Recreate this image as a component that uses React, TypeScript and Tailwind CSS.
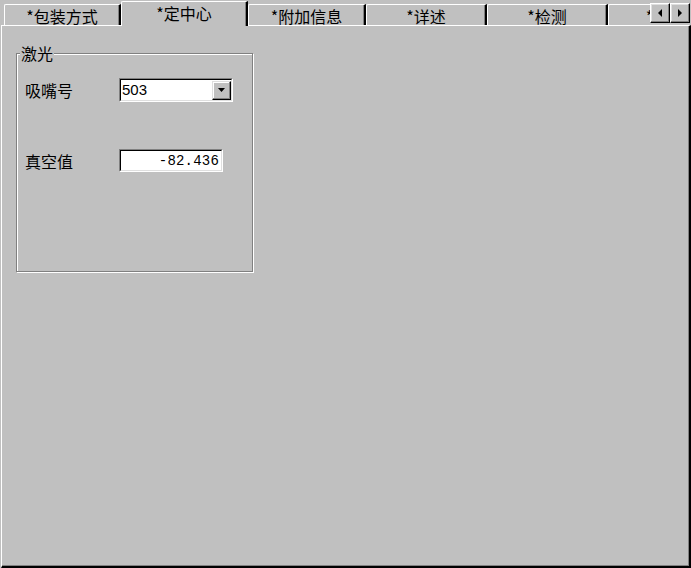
import React from 'react';

const cjk = { fontFamily: '"Noto Sans CJK SC", "Noto Sans", sans-serif' };

const Tab = ({ label, width, active }: { label: string; width: number; active?: boolean }) => {
  if (active) {
    return (
      <div
        className="relative z-10 -mb-px h-[25px] shrink-0 flex justify-center pt-[3px] bg-[#c0c0c0] border-t border-l border-white border-r-2 border-r-black rounded-tl-[2px] shadow-[inset_-1px_0_0_#808080] text-[16px] leading-[16px] text-black"
        style={{ width }}
      >
        {label}
      </div>
    );
  }
  return (
    <div
      className="h-[21px] shrink-0 flex justify-center pt-[3px] bg-[#c0c0c0] border-t border-l border-white border-r-2 border-r-black rounded-tl-[2px] shadow-[inset_-1px_0_0_#808080] text-[16px] leading-[16px] text-black"
      style={{ width }}
    >
      {label}
    </div>
  );
};

const ArrowButton = ({ dir }: { dir: 'left' | 'right' }) => (
  <div className="w-[20px] h-[20px] flex items-center justify-center bg-[#c0c0c0] border border-t-white border-l-white border-b-black border-r-black shadow-[inset_-1px_-1px_0_#808080,inset_1px_1px_0_#dfdfdf]">
    <svg width="5" height="8" viewBox="0 0 5 8">
      {dir === 'left' ? <polygon points="4,0 4,8 0,4" fill="#000" /> : <polygon points="0,0 0,8 4,4" fill="#000" />}
    </svg>
  </div>
);

const Sunken = ({ className, children }: { className: string; children: React.ReactNode }) => (
  <div className={`border border-t-[#808080] border-l-[#808080] border-b-white border-r-white ${className}`}>
    <div className="w-full h-full flex items-center bg-white border border-t-black border-l-black border-b-[#dfdfdf] border-r-[#dfdfdf]">
      {children}
    </div>
  </div>
);

const App = () => {
  return (
    <div className="w-[691px] h-[568px] bg-[#c0c0c0] flex flex-col overflow-hidden" style={cjk}>
      <div className="h-[25px] flex shrink-0 pl-[4px]">
        <div className="w-[646px] h-full flex items-end overflow-x-clip">
          <Tab label="*包装方式" width={117} />
          <Tab label="*定中心" width={127} active />
          <Tab label="*附加信息" width={118} />
          <Tab label="*详述" width={121} />
          <Tab label="*检测" width={121} />
          <Tab label="*其他" width={116} />
        </div>
        <div className="flex mt-[3px] self-start">
          <ArrowButton dir="left" />
          <ArrowButton dir="right" />
        </div>
      </div>

      <div className="flex-1 ml-px border-t border-l border-white border-r-2 border-b-2 border-r-black border-b-black shadow-[inset_-1px_-1px_0_#808080]">
        <div className="relative ml-[14px] mt-[27px] w-[237px] h-[219px] border border-[#808080] shadow-[1px_1px_0_#fff,inset_1px_1px_0_#fff]">
          <span className="absolute left-[3px] -top-[9px] px-px bg-[#c0c0c0] text-[16px] leading-[16px] text-black">
            激光
          </span>
          <div className="flex flex-col pl-[8px] pt-[24px] gap-[47px]">
            <div className="flex items-center h-[24px]">
              <div className="w-[94px] text-[16px] leading-[16px] text-black">吸嘴号</div>
              <Sunken className="w-[114px] h-[24px]">
                <span className="flex-1 pl-px text-[15px] leading-[16px] text-black" style={{ fontFamily: '"Liberation Sans", Arial, sans-serif' }}>
                  503
                </span>
                <div className="w-[19px] h-[19px] flex items-center justify-center bg-[#c0c0c0] border border-t-[#dfdfdf] border-l-[#dfdfdf] border-b-black border-r-black shadow-[inset_-1px_-1px_0_#808080,inset_1px_1px_0_#fff]">
                  <svg width="7" height="4" viewBox="0 0 7 4">
                    <polygon points="0,0 7,0 3.5,4" fill="#000" />
                  </svg>
                </div>
              </Sunken>
            </div>
            <div className="flex items-center h-[23px]">
              <div className="w-[94px] text-[16px] leading-[16px] text-black">真空值</div>
              <Sunken className="w-[104px] h-[23px]">
                <span className="flex-1 text-right pr-[2px] text-[14px] leading-[16px] tracking-[0.2px] text-black" style={{ fontFamily: '"Liberation Mono", "Courier New", monospace' }}>
                  -82.436
                </span>
              </Sunken>
            </div>
          </div>
        </div>
      </div>
    </div>
  );
};

export default App;
